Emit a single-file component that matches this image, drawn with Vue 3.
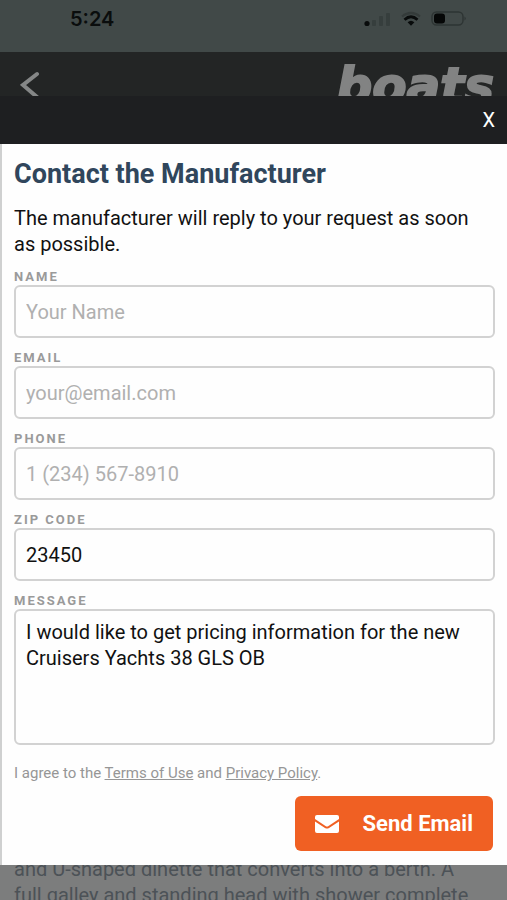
<script setup>
import { ref } from 'vue'

const fields = ref([
  { id: 'name', label: 'Name', type: 'text', placeholder: 'Your Name', value: '' },
  { id: 'email', label: 'Email', type: 'email', placeholder: 'your@email.com', value: '' },
  { id: 'phone', label: 'Phone', type: 'tel', placeholder: '1 (234) 567-8910', value: '' },
  { id: 'zip', label: 'Zip Code', type: 'text', placeholder: '', value: '23450' },
])
const message = ref('I would like to get pricing information for the new Cruisers Yachts 38 GLS OB')
</script>

<template>
  <div class="screen">
    <div class="status">
      <span class="time">5:24</span>
      <div class="indicators">
        <svg width="27" height="16" viewBox="0 0 27 16">
          <circle cx="3" cy="12.500" r="2.600" fill="#090c0c" />
          <g fill="#363e3d">
            <rect x="8" y="9" width="4" height="6" rx="1" />
            <rect x="15" y="5" width="4" height="10" rx="1" />
            <rect x="22" y="2" width="4" height="13" rx="1" />
          </g>
        </svg>
        <svg width="20" height="16" viewBox="0 0 20 16" fill="none">
          <path d="M1 5.500Q10-1.500 19 5.500" stroke="#343b3a" stroke-width="2.200" />
          <path d="M3.500 8.700Q10 2.800 16.500 8.700" stroke="#080b0b" stroke-width="2.800" />
          <path d="M6.600 11.300Q10 8.200 13.400 11.300L10 14.800Z" fill="#080b0b" />
        </svg>
        <svg width="36" height="16" viewBox="0 0 36 16">
          <rect x="1" y="1" width="31" height="13" rx="4.500" fill="none" stroke="#2d3433" stroke-width="1.400" />
          <rect x="3" y="2.500" width="11" height="10" rx="3" fill="#050707" />
          <path d="M33.500 5.500Q36 7.500 33.500 9.500Z" fill="#2d3433" />
        </svg>
      </div>
    </div>

    <header class="site-header">
      <a class="back" href="#" aria-label="Back">
        <svg width="20" height="28" viewBox="0 0 20 28">
          <path d="M17 4 3 15 17 27" fill="none" stroke="#858787" stroke-width="4" stroke-linecap="round" />
        </svg>
      </a>
      <span class="logo">boats</span>
    </header>

    <section class="modal" role="dialog" aria-labelledby="dialog-title">
      <div class="modal-bar">
        <button class="close" type="button">X</button>
      </div>
      <form class="form" @submit.prevent>
        <h1 id="dialog-title">Contact the Manufacturer</h1>
        <p class="intro">The manufacturer will reply to your request as soon as possible.</p>
        <div class="fields">
          <div v-for="f in fields" :key="f.id" class="field">
            <label :for="f.id">{{ f.label }}</label>
            <input :id="f.id" v-model="f.value" :type="f.type" :placeholder="f.placeholder" />
          </div>
          <div class="field">
            <label for="message">Message</label>
            <textarea id="message" v-model="message" spellcheck="false"></textarea>
          </div>
        </div>
        <p class="terms">
          I agree to the <a href="#">Terms of Use</a> and <a href="#">Privacy Policy</a>.
        </p>
        <button class="send" type="submit">
          <svg width="24" height="18" viewBox="0 0 24 18" fill="#fff">
            <path d="M2 0H22Q24 0 24 2V4L13.500 11Q12 12 10.500 11L0 4V2Q0 0 2 0Z" />
            <path d="M0 6.500 10 13Q12 14.200 14 13L24 6.500V16Q24 18 22 18H2Q0 18 0 16Z" />
          </svg>
          <span>Send Email</span>
        </button>
      </form>
    </section>

    <div class="page-text">
      <p>and U-shaped dinette that converts into a berth. A full galley and standing head with shower complete</p>
    </div>
  </div>
</template>

<style>
body {
  background: #7c7d7d;
}
</style>

<style scoped>
.screen {
  display: flex;
  flex-direction: column;
  height: 100vh;
  font-family: Roboto, "Liberation Sans", sans-serif;
  color: #111;
}
.status {
  display: flex;
  flex: none;
  justify-content: space-between;
  align-items: flex-start;
  height: 52px;
  padding: 8px 40px 0 70px;
  box-sizing: border-box;
  background: #414948;
}
.time {
  font: 600 20px/22px Inter, sans-serif;
  color: #0a0d0d;
}
.indicators {
  display: flex;
  gap: 10px;
  padding-top: 3px;
}
.site-header {
  display: flex;
  flex: none;
  justify-content: space-between;
  align-items: flex-start;
  height: 44px;
  padding: 0 13px 0 20px;
  overflow: hidden;
  background: #232525;
}
.back {
  display: block;
  padding-top: 18px;
  line-height: 0;
}
.logo {
  padding-top: 12px;
  font: italic 700 50px/44px "DejaVu Sans", sans-serif;
  color: #828383;
  -webkit-text-stroke: 2px #828383;
}
.modal {
  flex: none;
}
.modal-bar {
  display: flex;
  justify-content: flex-end;
  align-items: center;
  height: 48px;
  padding-right: 12px;
  background: #1e1f21;
}
.close {
  padding: 0;
  border: 0;
  background: none;
  font: 400 20px/24px Roboto, sans-serif;
  color: #fff;
}
.form {
  display: flex;
  flex-direction: column;
  padding: 14px 12px;
  border-left: 2px solid #cfd0d0;
  background: #fefefe;
}
h1 {
  margin: 0 0 15px;
  font-size: 27px;
  font-weight: 700;
  line-height: 32px;
  color: #30465c;
}
.intro {
  margin: 0 0 12px;
  padding-right: 12px;
  font-size: 20px;
  line-height: 26px;
}
.fields {
  display: flex;
  flex-direction: column;
  gap: 12px;
}
.field {
  display: flex;
  flex-direction: column;
}
label {
  font-size: 13px;
  font-weight: 700;
  line-height: 16px;
  letter-spacing: 2px;
  text-transform: uppercase;
  color: #9a9a9a;
}
input,
textarea {
  box-sizing: border-box;
  width: 100%;
  margin: 0;
  border: 2px solid #d2d2d2;
  border-radius: 6px;
  background: #fefefe;
  font: 400 20px/26px Roboto, sans-serif;
  color: #111;
}
input {
  height: 53px;
  padding: 0 10px;
}
input::placeholder {
  color: #b0b0b0;
  opacity: 1;
}
textarea {
  display: block;
  height: 136px;
  padding: 8px 10px;
  resize: none;
  overflow: hidden;
}
.terms {
  margin: 18px 0 13px;
  font-size: 15px;
  line-height: 20px;
  color: #969696;
}
.terms a {
  color: inherit;
  text-decoration: underline;
}
.send {
  display: flex;
  align-items: center;
  align-self: flex-end;
  gap: 24px;
  height: 55px;
  margin: 0 2px 0 0;
  padding: 0 20px;
  border: 0;
  border-radius: 6px;
  background: #f06023;
  font: 700 22px/26px Roboto, sans-serif;
  color: #fff;
}
.page-text {
  flex: 1;
  min-height: 0;
  padding: 0 24px 0 14px;
  overflow: hidden;
  background: #7c7d7d;
}
.page-text p {
  margin: -9px 0 0;
  font-size: 20px;
  line-height: 26px;
  color: #4c5257;
}
</style>
